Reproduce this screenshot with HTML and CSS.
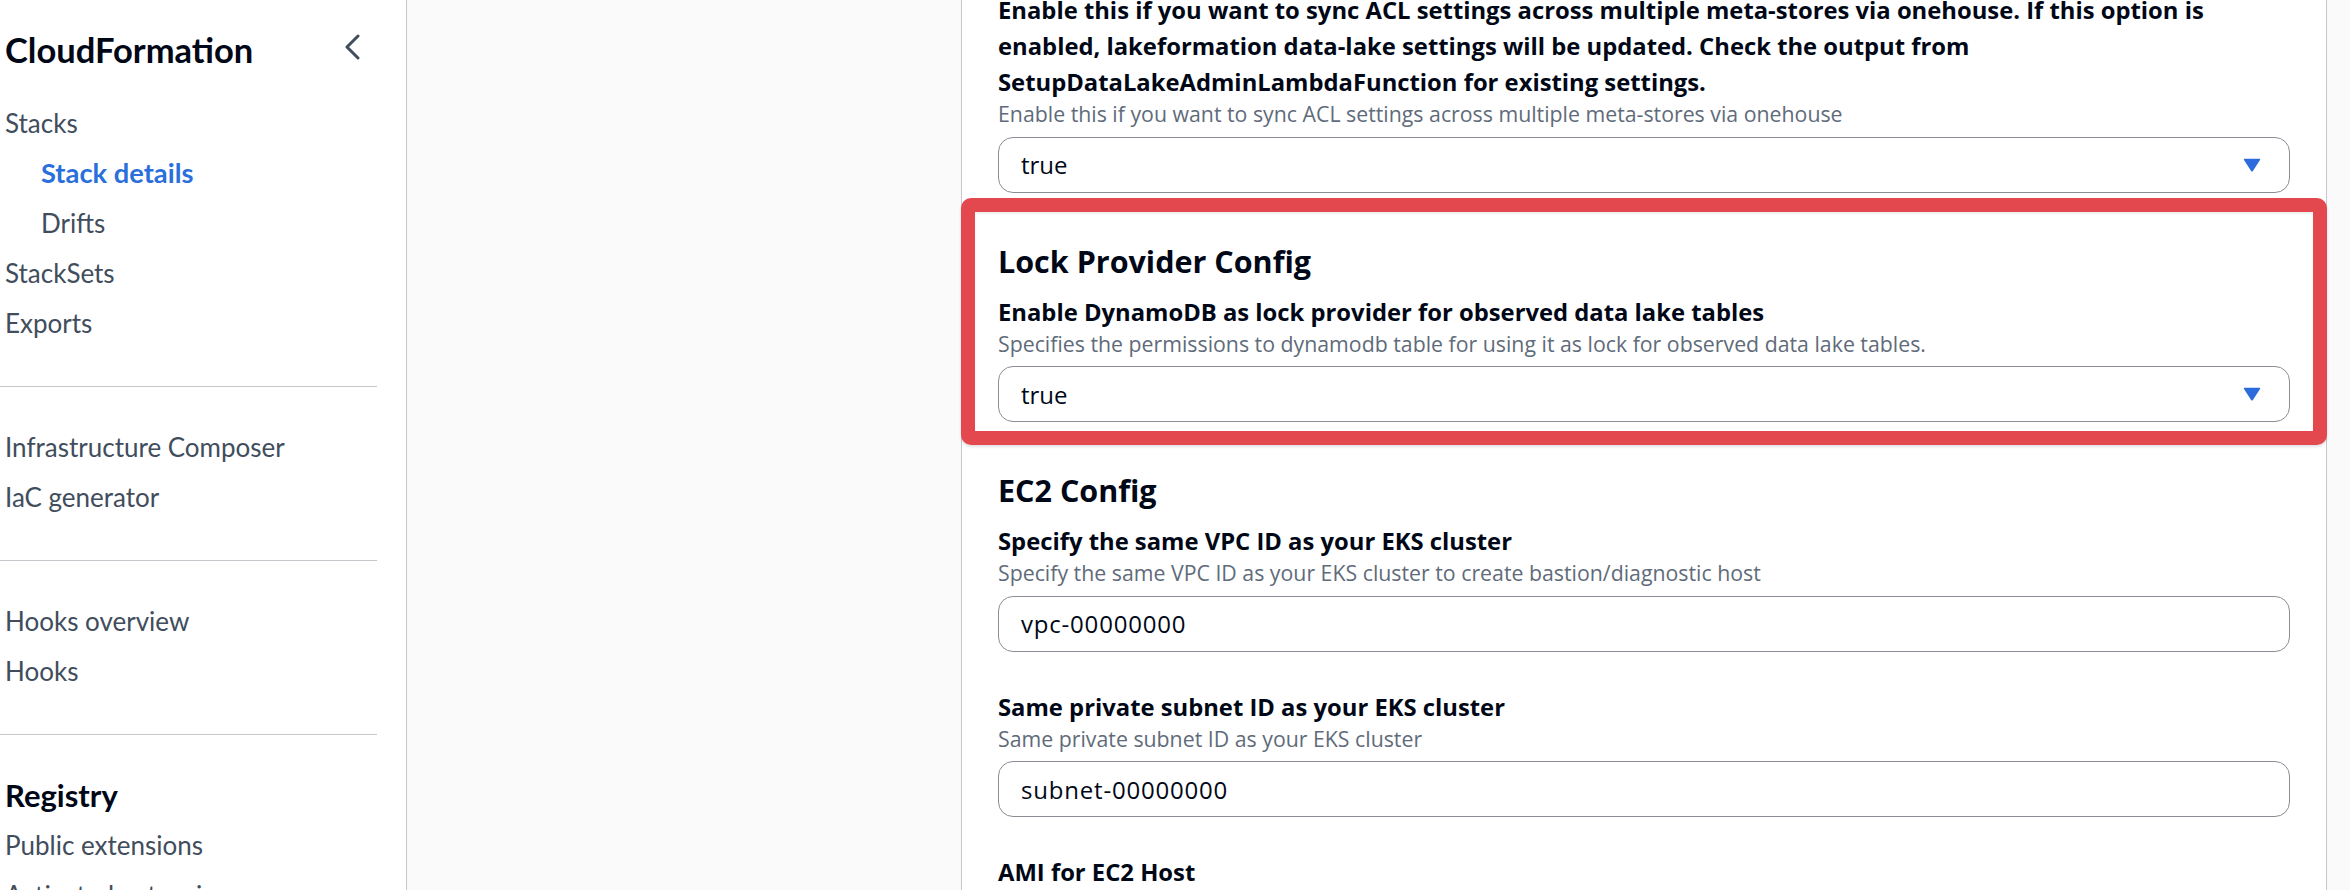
FILE: index.html
```html
<!DOCTYPE html>
<html lang="en">
<head>
<meta charset="utf-8">
<title>CloudFormation - Stack details</title>
<link rel="stylesheet" href="styles.css">
</head>
<body>
<div class="app">
  <nav class="sidebar">
    <div class="side-header">
      <span class="side-title">CloudFormation</span>
      <svg class="collapse" width="20" height="26" viewBox="0 0 20 26" aria-hidden="true">
        <path d="M15 2 L4 13 L15 24" fill="none" stroke="#414d5c" stroke-width="3" stroke-linecap="round" stroke-linejoin="round"/>
      </svg>
    </div>
    <ul class="nav">
      <li class="nav-item">Stacks</li>
      <li class="nav-item sub active">Stack details</li>
      <li class="nav-item sub">Drifts</li>
      <li class="nav-item">StackSets</li>
      <li class="nav-item">Exports</li>
    </ul>
    <div class="divider"></div>
    <ul class="nav">
      <li class="nav-item">Infrastructure Composer</li>
      <li class="nav-item">IaC generator</li>
    </ul>
    <div class="divider"></div>
    <ul class="nav">
      <li class="nav-item">Hooks overview</li>
      <li class="nav-item">Hooks</li>
    </ul>
    <div class="divider"></div>
    <div class="nav-heading">Registry</div>
    <ul class="nav">
      <li class="nav-item">Public extensions</li>
      <li class="nav-item">Activated extensions</li>
    </ul>
  </nav>

  <main class="main">
    <div class="panel">
      <section class="section">
        <div class="field">
          <div class="label">Enable this if you want to sync ACL settings across multiple meta-stores via onehouse. If this option is<br>enabled, lakeformation data-lake settings will be updated. Check the output from<br>SetupDataLakeAdminLambdaFunction for existing settings.</div>
          <div class="desc">Enable this if you want to sync ACL settings across multiple meta-stores via onehouse</div>
          <div class="control select">
            <span class="value">true</span>
            <svg class="caret" width="18" height="14" viewBox="0 0 18 14" aria-hidden="true"><path d="M1.5 0.8 H16.5 Q17.6 0.8 17 1.9 L9.9 13 Q9 14 8.1 13 L1 1.9 Q0.4 0.8 1.5 0.8 Z" fill="#2c6bdc"/></svg>
          </div>
        </div>
      </section>

      <section class="section highlight">
        <h2 class="section-title">Lock Provider Config</h2>
        <div class="field">
          <div class="label">Enable DynamoDB as lock provider for observed data lake tables</div>
          <div class="desc">Specifies the permissions to dynamodb table for using it as lock for observed data lake tables.</div>
          <div class="control select">
            <span class="value">true</span>
            <svg class="caret" width="18" height="14" viewBox="0 0 18 14" aria-hidden="true"><path d="M1.5 0.8 H16.5 Q17.6 0.8 17 1.9 L9.9 13 Q9 14 8.1 13 L1 1.9 Q0.4 0.8 1.5 0.8 Z" fill="#2c6bdc"/></svg>
          </div>
        </div>
      </section>

      <section class="section ec2">
        <h2 class="section-title">EC2 Config</h2>
        <div class="field">
          <div class="label">Specify the same VPC ID as your EKS cluster</div>
          <div class="desc">Specify the same VPC ID as your EKS cluster to create bastion/diagnostic host</div>
          <div class="control input"><span class="value">vpc-00000000</span></div>
        </div>
        <div class="field">
          <div class="label">Same private subnet ID as your EKS cluster</div>
          <div class="desc">Same private subnet ID as your EKS cluster</div>
          <div class="control input"><span class="value">subnet-00000000</span></div>
        </div>
        <div class="field">
          <div class="label">AMI for EC2 Host</div>
        </div>
      </section>
    </div>
  </main>
</div>
</body>
</html>
```

FILE: styles.css
```css
* { box-sizing: border-box; }

html, body {
  margin: 0;
  padding: 0;
}

body {
  width: 2350px;
  height: 890px;
  overflow: hidden;
  background: #fafafa;
  font-family: Lato, "Open Sans", "Liberation Sans", sans-serif;
  color: #000716;
}

.app {
  display: flex;
  height: 890px;
  overflow: hidden;
}

/* ---------- Sidebar ---------- */
.sidebar {
  width: 407px;
  flex: none;
  background: #ffffff;
  border-right: 1px solid #c6c6cd;
  padding-left: 5px;
  overflow: hidden;
}

.side-header {
  display: flex;
  align-items: center;
  justify-content: space-between;
  width: 358px;
  height: 50px;
  margin-top: 25px;
}

.side-title {
  font-size: 34.5px;
  font-weight: 700;
  line-height: 50px;
  color: #000716;
}

.collapse {
  margin-top: -7px;
}

.nav {
  list-style: none;
  margin: 0;
  padding: 0;
}

.side-header + .nav {
  margin-top: 23px;
}

.nav-item {
  font-size: 26px;
  line-height: 50px;
  color: #414d5c;
  white-space: nowrap;
}

.nav-item.sub {
  padding-left: 36px;
}

.nav-item.active {
  color: #2a6fdb;
  font-size: 27.3px;
  font-weight: 700;
}

.divider {
  height: 1px;
  width: 377px;
  margin: 38px 0 35px -5px;
  background: #c6c6cd;
}

.nav-heading {
  font-size: 31px;
  font-weight: 700;
  line-height: 50px;
  color: #000716;
  margin-top: 2px;
}

/* ---------- Main content ---------- */
.main {
  flex: 1;
  min-width: 0;
  padding: 0 23px 0 554px;
  font-family: "Open Sans", Lato, "Liberation Sans", sans-serif;
}

.panel {
  margin-top: -8px;
  min-height: 960px;
  background: #ffffff;
  border-left: 1px solid #c6c6cd;
  border-right: 1px solid #c6c6cd;
  padding: 0 36px 40px;
}

.section-title {
  margin: 0 0 15px;
  font-size: 30.5px;
  font-weight: 700;
  line-height: 36px;
  color: #000716;
}

.field + .field {
  margin-top: 37px;
}

.label {
  font-size: 23.8px;
  font-weight: 700;
  line-height: 36px;
  color: #000716;
  white-space: nowrap;
}

.desc {
  margin-top: 1px;
  font-size: 21.3px;
  line-height: 26px;
  color: #5f6b7a;
}

.control {
  margin-top: 9.5px;
  height: 56px;
  border: 1px solid #8c8c94;
  border-radius: 15px;
  background: #ffffff;
  display: flex;
  align-items: center;
  padding: 0 28px 0 22px;
  font-size: 24px;
  color: #000716;
}

.input .value {
  letter-spacing: 0.8px;
}

.select {
  justify-content: space-between;
}

.caret {
  flex: none;
}

.highlight {
  margin: 5px -37px 0;
  border: 14px solid #e3484e;
  border-radius: 10px;
  padding: 31px 23px 9px;
  box-shadow: 0 2px 3px rgba(0, 0, 0, 0.12), inset 0 2px 2px rgba(0, 0, 0, 0.06);
}

.ec2 {
  margin-top: 27px;
}
```
